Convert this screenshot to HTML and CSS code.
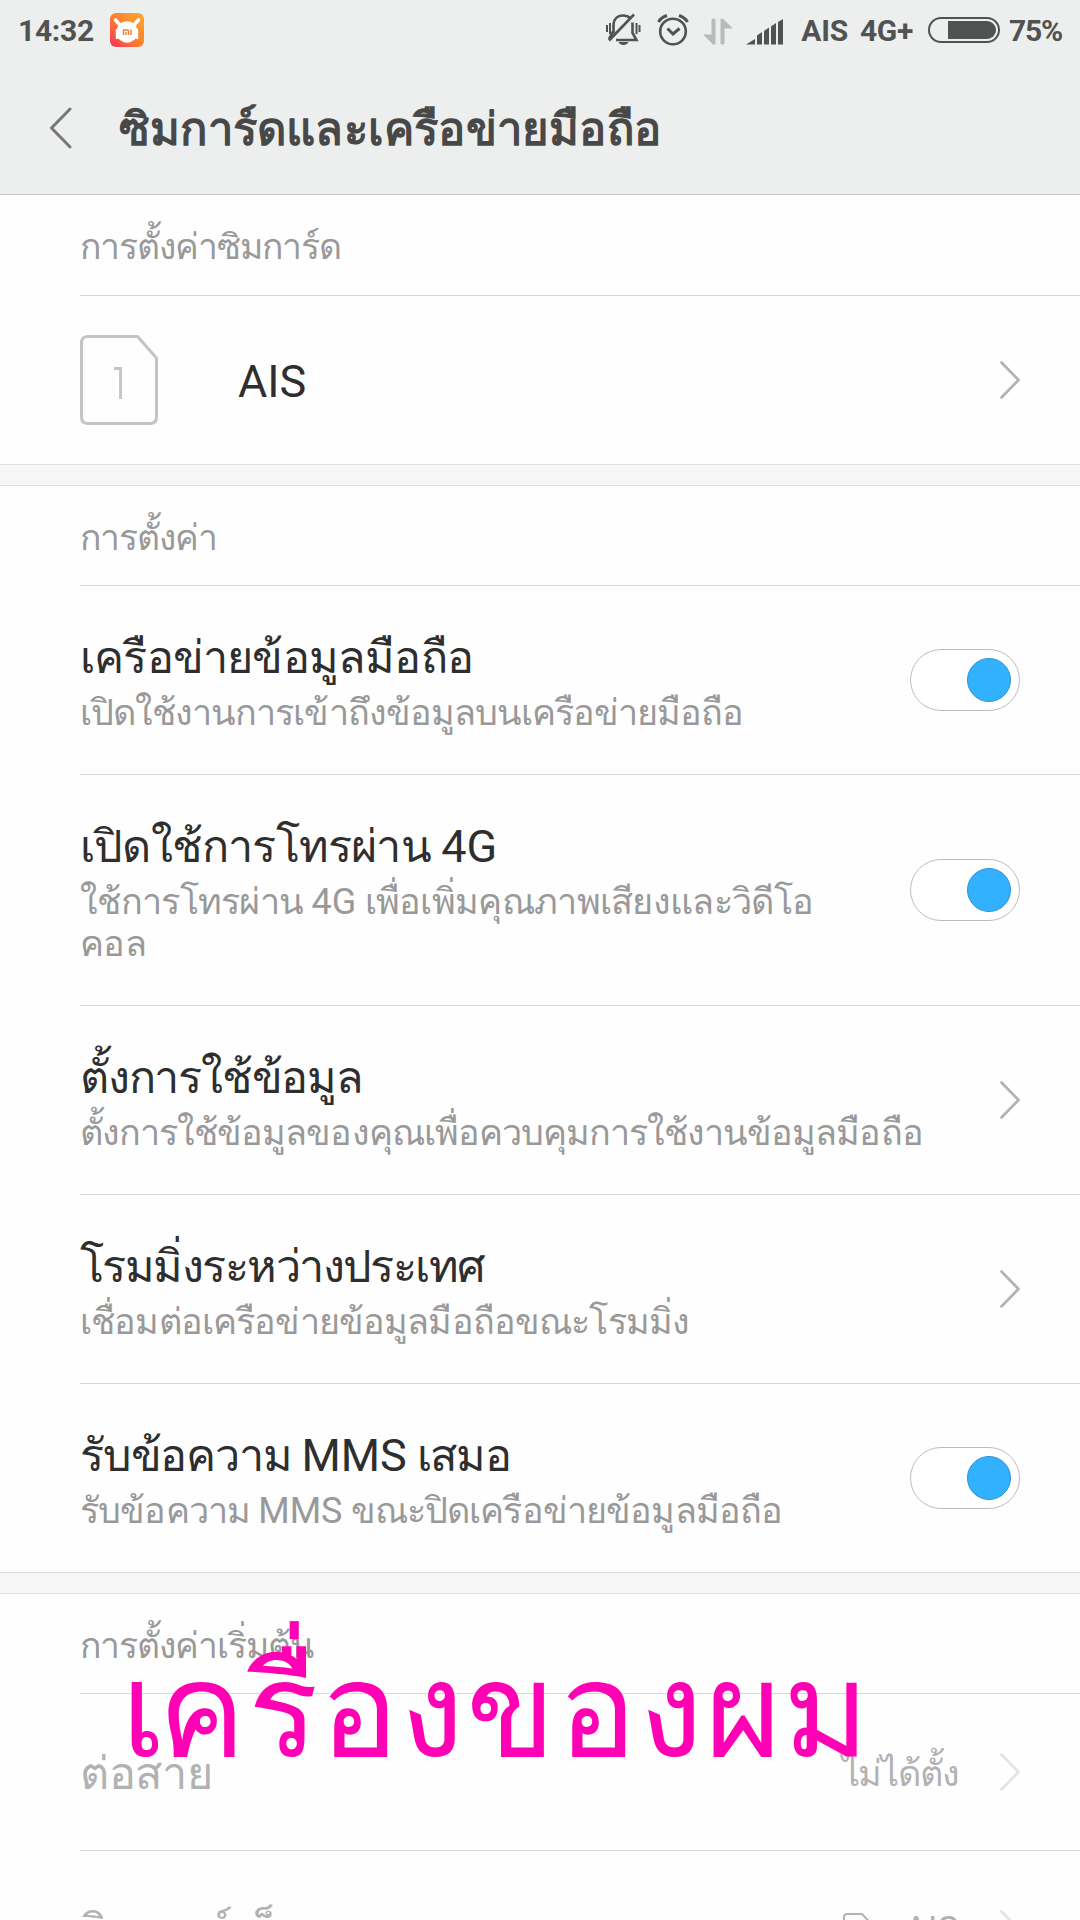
FILE: index.html
```html
<!DOCTYPE html>
<html lang="th">
<head>
<meta charset="utf-8">
<title>ซิมการ์ดและเครือข่ายมือถือ</title>
<link rel="stylesheet" href="styles.css">
</head>
<body>
<div class="screen">
  <header class="top">
    <div class="status">
      <span class="clock">14:32</span>
      <svg class="app-icon" width="34" height="34" viewBox="0 0 34 34">
        <defs><linearGradient id="mi" x1="0" y1="1" x2="1" y2="0"><stop offset="0" stop-color="#fb2d5e"/><stop offset=".45" stop-color="#fc7b2e"/><stop offset="1" stop-color="#ffab2c"/></linearGradient></defs>
        <rect width="34" height="34" rx="6" fill="url(#mi)"/>
        <path d="M5.500 7.000L10.500 12.500M28.500 7.000L23.500 12.500" stroke="#fff" stroke-width="3.600" stroke-linecap="round"/>
        <circle cx="17" cy="19" r="10.700" fill="#fff"/>
        <path d="M7 16v10M27 16v10" stroke="#fff" stroke-width="2.400"/>
        <path d="M13.500 22v-5h3.500q1.500 0 1.500 1.500v3.500M16 19v3M21 16.500v5.500" fill="none" stroke="#f5793a" stroke-width="1.400"/>
      </svg>
      <div class="indicators">
        <svg class="bell" width="36" height="34" viewBox="0 0 36 34" fill="none" stroke="#505351" stroke-width="2.600">
          <path d="M8.500 20V12.500C8.500 6 12.500 2.500 18 2.500Q22.500 2.500 25 5M27.500 9.500V20L31.500 27H11M8.500 18L4 26"/>
          <path d="M29 1.500L4 27.500"/>
          <path d="M2 12v7M5 10v11M31.500 10v11M34.500 12v7" stroke-width="2"/>
          <path d="M13.500 29h10q-1.500 3-5 3t-5-3z" fill="#505351" stroke="none"/>
        </svg>
        <svg class="alarm" width="34" height="34" viewBox="0 0 34 34" fill="none" stroke="#505351" stroke-width="2.600">
          <circle cx="17" cy="18.500" r="12.800"/>
          <path d="M2.500 9Q5 4.500 11 2.500M31.500 9Q29 4.500 23 2.500M11.500 15.500L17 21L23.500 15.500" stroke-width="3"/>
        </svg>
        <svg class="data" width="28" height="28" viewBox="0 0 28 28" fill="#b9bbba">
          <path d="M7.500 1.500q0-1 2-1t2 1V26.500H9L0 17.500v-1h7.500zM16.500 1.500q0-1 2-1L28 9.500v1h-7.500v15q0 1-2 1t-2-1z"/>
        </svg>
        <svg class="signal" width="38" height="26" viewBox="0 0 38 26" fill="#505351">
          <path d="M0 25.500L9 20v5.500zM11 25.500V16.500L16 13v12.500zM18 25.500V12L23 8.500v17zM25 25.500V7.500L30 4v21.500zM32 25.500V3L37 0v25.500z"/>
        </svg>
        <span class="carrier">AIS</span>
        <span class="network">4G+</span>
        <span class="battery"><i class="charge"></i></span>
        <span class="percent">75%</span>
      </div>
    </div>
    <div class="nav">
      <svg class="back" width="24" height="42" viewBox="0 0 24 42" fill="none" stroke="#777" stroke-width="3" stroke-linecap="round" stroke-linejoin="round"><path d="M21 2L2.500 21L21 40"/></svg>
      <h1>ซิมการ์ดและเครือข่ายมือถือ</h1>
    </div>
  </header>

  <section class="group">
    <h2 class="first">การตั้งค่าซิมการ์ด</h2>
    <div class="row sim-row">
      <svg class="sim" width="78" height="90" viewBox="0 0 78 90" fill="none" stroke="#c4c4c4" stroke-width="3"><path d="M8 1.500H57.500L76.500 23V82Q76.500 88.500 70 88.500H8Q1.500 88.500 1.500 82V8Q1.500 1.500 8 1.500z"/><path d="M34 33.500h6.500V64" stroke-width="2.800"/></svg>
      <div class="name latin">AIS</div>
      <svg class="chevron" viewBox="0 0 20 38"><path d="M1.500 1.500L18.500 19L1.500 36.500"/></svg>
    </div>
  </section>

  <section class="group">
    <h2>การตั้งค่า</h2>
    <div class="row">
      <div class="text"><div class="title loose">เครือข่ายข้อมูลมือถือ</div><div class="sub snug">เปิดใช้งานการเข้าถึงข้อมูลบนเครือข่ายมือถือ</div></div>
      <span class="toggle"><i class="knob"></i></span>
    </div>
    <div class="row tall">
      <div class="text"><div class="title loose">เปิดใช้การโทรผ่าน <span class="latin">4G</span></div><div class="sub loose">ใช้การโทรผ่าน <span class="latin">4G</span> เพื่อเพิ่มคุณภาพเสียงและวิดีโอ<br>คอล</div></div>
      <span class="toggle"><i class="knob"></i></span>
    </div>
    <div class="row">
      <div class="text"><div class="title">ตั้งการใช้ข้อมูล</div><div class="sub snug">ตั้งการใช้ข้อมูลของคุณเพื่อควบคุมการใช้งานข้อมูลมือถือ</div></div>
      <svg class="chevron" viewBox="0 0 20 38"><path d="M1.500 1.500L18.500 19L1.500 36.500"/></svg>
    </div>
    <div class="row">
      <div class="text"><div class="title tight">โรมมิ่งระหว่างประเทศ</div><div class="sub">เชื่อมต่อเครือข่ายข้อมูลมือถือขณะโรมมิ่ง</div></div>
      <svg class="chevron" viewBox="0 0 20 38"><path d="M1.500 1.500L18.500 19L1.500 36.500"/></svg>
    </div>
    <div class="row">
      <div class="text"><div class="title">รับข้อความ <span class="latin">MMS</span> เสมอ</div><div class="sub">รับข้อความ <span class="latin">MMS</span> ขณะปิดเครือข่ายข้อมูลมือถือ</div></div>
      <span class="toggle"><i class="knob"></i></span>
    </div>
  </section>

  <section class="group">
    <h2>การตั้งค่าเริ่มต้น</h2>
    <div class="row short disabled">
      <div class="name">ต่อสาย</div>
      <div class="value">ไม่ได้ตั้ง</div>
      <svg class="chevron" viewBox="0 0 20 38"><path d="M1.500 1.500L18.500 19L1.500 36.500"/></svg>
    </div>
    <div class="row short disabled">
      <div class="name">อินเทอร์เน็ต</div>
      <svg class="sim-small" width="28" height="33" viewBox="0 0 28 33" fill="none" stroke="#b2b2b2" stroke-width="2"><path d="M4 1H19L27 9.500V29Q27 32 24 32H4Q1 32 1 29V4Q1 1 4 1z"/></svg>
      <div class="value latin operator">AIS</div>
      <svg class="chevron" viewBox="0 0 20 38"><path d="M1.500 1.500L18.500 19L1.500 36.500"/></svg>
    </div>
  </section>

  <div class="caption"><span class="lead">เ</span>ครื่องของผม</div>
</div>
</body>
</html>
```
FILE: styles.css
```css
* { box-sizing: border-box; }
body { margin: 0; background: #fff; font-family: Roboto, "Noto Sans", sans-serif; color: #2e2e2e; }
.screen { position: relative; width: 1080px; height: 1920px; overflow: hidden; background: #fefefe; }
h1, h2 { margin: 0; }
svg { display: block; flex: none; }

.top { height: 195px; background: #edefee; border-bottom: 1px solid #c6c8c7; }
.status { display: flex; align-items: center; height: 60px; padding: 0 18px; font-size: 30px; line-height: 58px; font-weight: 700; letter-spacing: -0.3px; color: #505351; }
.status span { padding-top: 1px; }
.app-icon { margin-left: 16px; }
.indicators { display: flex; align-items: center; margin-left: auto; }
.bell { margin-right: 15px; }
.alarm { margin-right: 14px; }
.data { margin: 3px 14px 0 0; }
.signal { margin: 3px 17px 0 0; }
.carrier { margin-right: 12px; }
.network { margin-right: 15px; }
.status .battery { display: flex; justify-content: flex-end; width: 72px; height: 26px; padding: 2px; margin-right: 9px; border: 2px solid #505351; border-radius: 13px; }
.charge { width: 48px; background: #505351; border-radius: 0 9px 9px 0; }
.percent { letter-spacing: -1.2px; }

.nav { display: flex; align-items: center; height: 134px; padding: 2px 0 0 49px; }
.back { margin-right: 46px; }
h1 { padding-top: 3px; font-size: 45.4px; line-height: 70px; font-weight: 700; letter-spacing: 0.2px; color: #484848; }

.group + .group { border-top: 1px solid #e0e0e0; }
.group + .group::before { content: ""; display: block; height: 20px; background: #f6f6f6; border-bottom: 1px solid #e0e0e0; }
h2 { height: 99px; margin-left: 80px; padding-top: 7px; font-size: 35.5px; line-height: 91px; font-weight: 400; letter-spacing: -1px; color: #999; }
h2.first { height: 100px; }
.row { display: flex; align-items: center; height: 189px; margin-left: 80px; padding-right: 60px; border-top: 1px solid #d8d8d8; }
.sim-row { height: 169px; }
.tall { height: 231px; }
.short { height: 157px; }
.text { flex: 1; padding-bottom: 2px; white-space: nowrap; }
.title { font-size: 45px; line-height: 68px; letter-spacing: -1.2px; }
.title.loose { letter-spacing: -0.8px; }
.title.tight { letter-spacing: -1.55px; }
.sub { font-size: 36px; line-height: 42px; letter-spacing: -0.86px; color: #999; }
.sub.snug { letter-spacing: -0.96px; }
.sub.loose { letter-spacing: -0.7px; }
.text .latin, .name.latin, .value.latin { letter-spacing: 0; }
.name { flex: 1; padding-top: 4px; font-size: 45px; line-height: 68px; letter-spacing: -0.3px; }
.sim { margin-right: 80px; }
.value { margin-right: 41px; padding-top: 4px; font-size: 36px; line-height: 50px; letter-spacing: -1.1px; }
.value.operator { padding-top: 2px; }
.sim-small { margin-right: 33px; }
.disabled { color: #b2b2b2; }
.chevron { width: 20px; height: 38px; fill: none; stroke: #b3b3b3; stroke-width: 2.700px; stroke-linecap: round; stroke-linejoin: round; }
.disabled .chevron { stroke: #e3e3e3; }
.toggle { display: flex; align-items: center; justify-content: flex-end; width: 110px; height: 62px; padding-right: 8px; border: 1px solid #bdbdbd; border-radius: 31px; background: #fff; }
.knob { width: 44px; height: 44px; border: 1px solid #2d93d6; border-radius: 50%; background: #32b1ff; }

.caption { position: absolute; left: 121px; top: 1611px; font-size: 131px; line-height: 200px; letter-spacing: 1.8px; color: #ff00b4; white-space: nowrap; }
.lead { letter-spacing: -8px; }
```
